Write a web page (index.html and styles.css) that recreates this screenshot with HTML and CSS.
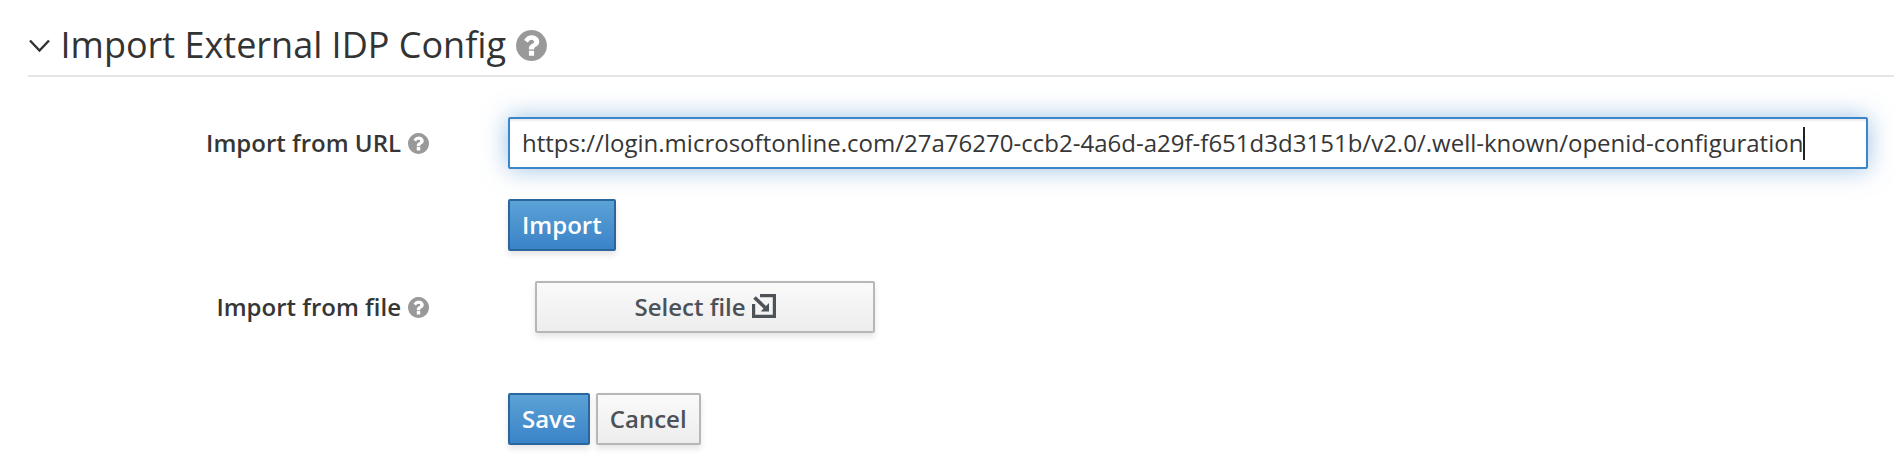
FILE: index.html
```html
<!DOCTYPE html>
<html lang="en">
<head>
<meta charset="utf-8">
<title>Import External IDP Config</title>
<link rel="stylesheet" href="styles.css">
</head>
<body>
<svg class="sprite" aria-hidden="true">
  <symbol id="help" viewBox="128 128 1536 1536"><path fill="currentColor" d="M1024 1376v-192q0-14-9-23t-23-9h-192q-14 0-23 9t-9 23v192q0 14 9 23t23 9h192q14 0 23-9t9-23zm256-672q0-88-55.500-163t-138.500-116-170-41q-243 0-371 213-15 24 8 42l132 100q7 6 19 6 16 0 25-12 53-68 86-92 34-24 86-24 48 0 85.500 26t37.500 59q0 38-20 61t-68 45q-63 28-115.500 86.500t-52.500 125.500v36q0 14 9 23t23 9h192q14 0 23-9t9-23q0-19 21.500-49.500t54.500-49.500q32-18 49-28.500t46-35 44.500-48 28-60.500 12.500-81zm384 192q0 209-103 385.500t-279.500 279.500-385.500 103-385.500-103-279.500-279.500-103-385.500 103-385.500 279.500-279.500 385.500-103 385.500 103 279.500 279.500 103 385.500z"/></symbol>
</svg>
<form class="page">
  <h2 class="legend">
    <svg class="chevron" viewBox="0 0 22 14"><path d="M2 1.500L11.500 11.500L21 1.500"/></svg>
    <span class="legend-text">Import External IDP Config</span>
    <svg class="help help-lg"><use href="#help"/></svg>
  </h2>
  <div class="row">
    <div class="label"><span>Import from URL</span><svg class="help"><use href="#help"/></svg></div>
    <div class="input"><span>https://login.microsoftonline.com/27a76270-ccb2-4a6d-a29f-f651d3d3151b/v2.0/.well-known/openid-configuration</span><i class="caret"></i></div>
  </div>
  <div class="row row-import"><button type="button" class="btn primary">Import</button></div>
  <div class="row row-file">
    <div class="label"><span>Import from file</span><svg class="help"><use href="#help"/></svg></div>
    <button type="button" class="btn select">Select file
      <svg class="file-icon" viewBox="0 0 24 24"><path class="frame" d="M8 1.600H22.400V22.400H1.600V10"/><path class="shaft" d="M2.500 3.500L13 13.500"/><path class="head" d="M17 9V17.400H8.700Z"/></svg>
    </button>
  </div>
  <div class="row row-actions"><button type="button" class="btn primary">Save</button><button type="button" class="btn">Cancel</button></div>
</form>
</body>
</html>
```
FILE: styles.css
```css
* { box-sizing: border-box; }
body {
  margin: 0;
  background: #fff;
  color: #363636;
  font: 24px/40px "Open Sans", sans-serif;
  overflow: hidden;
}
.sprite { display: none; }
.page { padding: 15px 0 0 28px; height: 470px; }
.legend {
  display: flex;
  align-items: center;
  height: 62px;
  margin: 0 0 40px;
  border-bottom: 2px solid #e5e5e5;
  font-size: 36px;
  font-weight: 400;
  color: #333;
}
.chevron { width: 22px; height: 14px; margin: 2px 10.500px 0 0; }
.chevron path { fill: none; stroke: #333; stroke-width: 2.4; }
.help { width: 21px; height: 21px; margin: 0 -.5px 0 6.500px; color: #999; flex: none; }
.help-lg { width: 31px; height: 31px; margin-left: 10.500px; }
.row { display: flex; align-items: center; height: 52px; padding-right: 26px; }
.row-import { margin-top: 30px; padding-left: 480px; }
.row-file { margin-top: 30px; }
.row-actions { margin-top: 60px; padding-left: 480px; gap: 6px; }
.label {
  display: flex;
  align-items: center;
  justify-content: flex-end;
  width: 400px;
  margin-right: 80px;
  font-weight: 600;
  flex: none;
}
.input {
  display: flex;
  align-items: center;
  flex: 1;
  height: 52px;
  padding: 0 12px;
  border: 2px solid #3b86ca;
  border-radius: 2px;
  box-shadow: inset 0 2px 2px rgba(0, 0, 0, .075), 0 0 24px rgba(57, 134, 202, .5);
  letter-spacing: .01px;
  white-space: nowrap;
}
.caret { width: 2px; height: 33px; background: #222; }
.btn {
  height: 52px;
  padding: 4px 12px;
  border: 2px solid #b7b7b7;
  border-radius: 2px;
  background: linear-gradient(#fafafa, #ededed);
  box-shadow: 0 4px 6px rgba(3, 3, 3, .1);
  color: #4d5258;
  font: 600 24px/40px "Open Sans", sans-serif;
}
.primary {
  border-color: #2a669c;
  background: linear-gradient(#5ba2d6, #3b83c8);
  color: #fff;
}
.select {
  display: flex;
  align-items: center;
  justify-content: center;
  gap: 6px;
  width: 340px;
  margin-left: 27px;
}
.file-icon { width: 24px; height: 24px; margin-bottom: 3px; }
.frame, .shaft { fill: none; stroke: currentColor; stroke-width: 3.2; }
.shaft { stroke-width: 3.6; }
.head { fill: currentColor; }
```
